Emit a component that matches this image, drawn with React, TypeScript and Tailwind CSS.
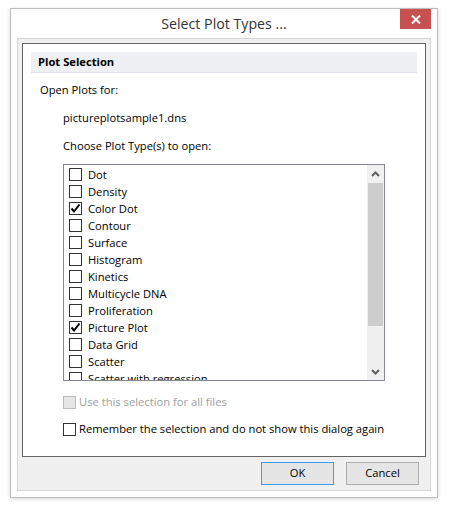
import React from 'react'

const items: { label: string; checked?: boolean }[] = [
  { label: 'Dot' },
  { label: 'Density' },
  { label: 'Color Dot', checked: true },
  { label: 'Contour' },
  { label: 'Surface' },
  { label: 'Histogram' },
  { label: 'Kinetics' },
  { label: 'Multicycle DNA' },
  { label: 'Proliferation' },
  { label: 'Picture Plot', checked: true },
  { label: 'Data Grid' },
  { label: 'Scatter' },
  { label: 'Scatter with regression' },
]

function Box({ checked, disabled }: { checked?: boolean; disabled?: boolean }) {
  return (
    <span
      className={
        'w-[13px] h-[13px] shrink-0 border flex items-center justify-center ' +
        (disabled ? 'border-[#bcbcbc] bg-[#e6e6e6]' : 'border-[#333333] bg-white')
      }
    >
      {checked && (
        <svg width="11" height="11" viewBox="0 0 11 11">
          <path d="M1.5 5.5 L4 8.5 L9.5 1.5" fill="none" stroke="#000" strokeWidth="2" />
        </svg>
      )}
    </span>
  )
}

function Chevron({ up }: { up?: boolean }) {
  return (
    <svg width="9" height="6" viewBox="0 0 9 6">
      <path d={up ? 'M1 5 L4.5 1.5 L8 5' : 'M1 1 L4.5 4.5 L8 1'} fill="none" stroke="#606060" strokeWidth="2" />
    </svg>
  )
}

export default function App() {
  return (
    <div
      className="w-[449px] h-[511px] bg-white pl-[10px] pt-[8px] text-[11.2px] text-black"
      style={{ fontFamily: '"Open Sans", "Noto Sans", sans-serif' }}
    >
      <div className="w-[428px] h-[490px] border border-[#bdbdbd] bg-white shadow-[0_1px_4px_rgba(0,0,0,0.15)] flex flex-col">
        {/* title bar */}
        <div className="relative h-[29px] shrink-0 flex items-center justify-center">
          <span className="text-[14.2px] text-[#333333] mt-[1px]">Select Plot Types ...</span>
          <button className="absolute right-[6px] top-0 w-[31px] h-[20px] bg-[#c75050] flex items-center justify-center">
            <svg width="10" height="9" viewBox="0 0 10 9">
              <path d="M1 0.5 L9 8.5 M9 0.5 L1 8.5" stroke="#fff" strokeWidth="2" />
            </svg>
          </button>
        </div>

        {/* client area */}
        <div className="mx-[6px] mb-[6px] flex-1 border border-[#d4d4d4] bg-[#f0f0f0] flex flex-col">
          <div className="ml-[4px] mt-[4px] w-[404px] h-[414px] border border-[#646464] bg-white flex flex-col">
            <div className="mx-[8px] mt-[8px] h-[21px] bg-[#eef0f4] border-b border-[#dfe2e8] flex items-center pl-[7px] font-bold">
              Plot Selection
            </div>
            <div className="ml-[17px] mt-[9px] h-[16px] leading-[16px]">Open Plots for:</div>
            <div className="ml-[40px] mt-[12px] h-[16px] leading-[16px]">pictureplotsample1.dns</div>
            <div className="ml-[40px] mt-[12px] h-[16px] leading-[16px]">Choose Plot Type(s) to open:</div>

            {/* list box */}
            <div className="ml-[40px] mt-[10px] w-[322px] h-[217px] border border-[#828790] flex">
              <div className="flex-1 overflow-hidden pt-[1px]">
                {items.map((it) => (
                  <div key={it.label} className="h-[17px] flex items-center pl-[5px] gap-[6px] leading-[16px]">
                    <Box checked={it.checked} />
                    <span>{it.label}</span>
                  </div>
                ))}
              </div>
              <div className="w-[17px] bg-[#f0f0f0] flex flex-col">
                <div className="h-[17px] flex items-center justify-center">
                  <Chevron up />
                </div>
                <div className="mt-[1px] h-[143px] mx-[1px] bg-[#cdcdcd]" />
                <div className="flex-1" />
                <div className="h-[17px] flex items-center justify-center">
                  <Chevron />
                </div>
              </div>
            </div>

            <div className="ml-[40px] mt-[13px] h-[16px] flex items-center gap-[3px] text-[#a0a0a0]">
              <Box disabled />
              <span>Use this selection for all files</span>
            </div>
            <div className="ml-[40px] mt-[11px] h-[16px] flex items-center gap-[3px]">
              <Box />
              <span>Remember the selection and do not show this dialog again</span>
            </div>
          </div>

          <div className="mt-[5px] mr-[11px] flex justify-end gap-[12px]">
            <button className="w-[73px] h-[23px] border border-[#3c9bf0] bg-[#e5e5e5]">OK</button>
            <button className="w-[73px] h-[23px] border border-[#adadad] bg-[#e5e5e5]">Cancel</button>
          </div>
        </div>
      </div>
    </div>
  )
}
